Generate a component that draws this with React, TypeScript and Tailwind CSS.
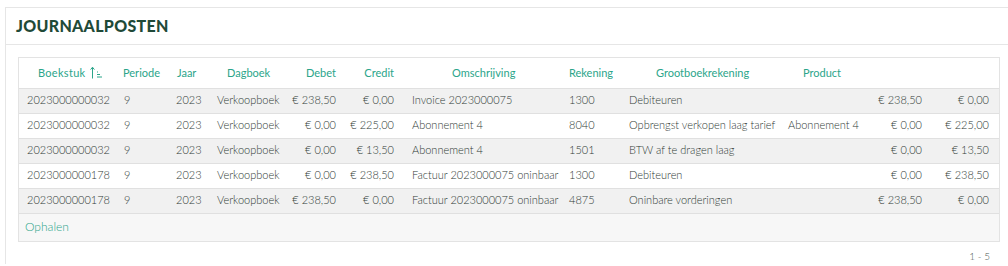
const rows = [
  { stuk: '2023000000032', periode: '9', jaar: '2023', dagboek: 'Verkoopboek', debet: '€ 238,50', credit: '€ 0,00', omschrijving: 'Invoice 2023000075', rekening: '1300', grootboek: 'Debiteuren', product: '', d2: '€ 238,50', c2: '€ 0,00' },
  { stuk: '2023000000032', periode: '9', jaar: '2023', dagboek: 'Verkoopboek', debet: '€ 0,00', credit: '€ 225,00', omschrijving: 'Abonnement 4', rekening: '8040', grootboek: 'Opbrengst verkopen laag tarief', product: 'Abonnement 4', d2: '€ 0,00', c2: '€ 225,00' },
  { stuk: '2023000000032', periode: '9', jaar: '2023', dagboek: 'Verkoopboek', debet: '€ 0,00', credit: '€ 13,50', omschrijving: 'Abonnement 4', rekening: '1501', grootboek: 'BTW af te dragen laag', product: '', d2: '€ 0,00', c2: '€ 13,50' },
  { stuk: '2023000000178', periode: '9', jaar: '2023', dagboek: 'Verkoopboek', debet: '€ 0,00', credit: '€ 238,50', omschrijving: 'Factuur 2023000075 oninbaar', rekening: '1300', grootboek: 'Debiteuren', product: '', d2: '€ 0,00', c2: '€ 238,50' },
  { stuk: '2023000000178', periode: '9', jaar: '2023', dagboek: 'Verkoopboek', debet: '€ 238,50', credit: '€ 0,00', omschrijving: 'Factuur 2023000075 oninbaar', rekening: '4875', grootboek: 'Oninbare vorderingen', product: '', d2: '€ 238,50', c2: '€ 0,00' },
];

function SortIcon() {
  return (
    <svg width="13" height="13" viewBox="0 0 13 13" className="ml-[4px] inline-block" fill="none" stroke="#2ba58a" strokeWidth="1">
      <path d="M2.5 12.5V1.5M0.6 3.6L2.5 1.2L4.4 3.6" />
      <path d="M7 6H8M7 8.5H10M7 11H12" />
    </svg>
  );
}

export default function App() {
  const th = 'h-[30px] p-0 align-middle font-normal text-[#2ba58a] whitespace-nowrap';
  const td = 'h-[25px] p-0 align-middle whitespace-nowrap';

  return (
    <div className="h-[266px] w-[1008px] overflow-hidden bg-white pl-[5px] pt-[7px]" style={{ fontFamily: 'Lato, "Open Sans", sans-serif' }}>
      <div className="w-[1012px] border-l border-t border-[#e6e6e6]">
        <div className="flex h-[37px] items-center border-b border-[#e6e6e6] pl-[10px]">
          <h1 className="text-[16px] font-black tracking-[0.3px] text-[#1f4a38]">JOURNAALPOSTEN</h1>
        </div>
        <div className="pl-[12px] pt-[12px]">
          <div className="w-[982px] border border-[#e3e3e3]">
            <table className="w-[980px] table-fixed border-collapse text-[11px] font-light text-[#2f3a35]">
              <colgroup>
                <col className="w-[96px]" />
                <col className="w-[52px]" />
                <col className="w-[41px]" />
                <col className="w-[78px]" />
                <col className="w-[59px]" />
                <col className="w-[58px]" />
                <col className="w-[157px]" />
                <col className="w-[60px]" />
                <col className="w-[159px]" />
                <col className="w-[84px]" />
                <col className="w-[68px]" />
                <col className="w-[68px]" />
              </colgroup>
              <thead>
                <tr className="border-b border-[#e0e0e0]">
                  <th className={`${th} pl-[19px] text-left`}>
                    <span className="inline-flex items-center tracking-[0.3px]">Boekstuk<SortIcon /></span>
                  </th>
                  <th className={`${th} pl-[8px] text-left`}>Periode</th>
                  <th className={`${th} pl-[10px] text-left`}>Jaar</th>
                  <th className={`${th} pl-[19px] text-left`}>Dagboek</th>
                  <th className={`${th} pr-[9px] text-right`}>Debet</th>
                  <th className={`${th} pr-[9px] text-right`}>Credit</th>
                  <th className={`${th} pl-[49px] text-left`}>Omschrijving</th>
                  <th className={`${th} pl-[9px] text-left`}>Rekening</th>
                  <th className={`${th} pl-[36px] text-left`}>Grootboekrekening</th>
                  <th className={`${th} pl-[24px] text-left`}>Product</th>
                  <th className={th}></th>
                  <th className={th}></th>
                </tr>
              </thead>
              <tbody>
                {rows.map((r, i) => (
                  <tr key={i} className={`border-b border-[#e0e0e0] ${i % 2 === 0 ? 'bg-[#f1f1f1]' : 'bg-white'}`}>
                    <td className={`${td} pl-[8px]`}>{r.stuk}</td>
                    <td className={`${td} pl-[9px]`}>{r.periode}</td>
                    <td className={`${td} pl-[9px]`}>{r.jaar}</td>
                    <td className={`${td} pl-[9px]`}>{r.dagboek}</td>
                    <td className={`${td} pr-[9px] text-right`}>{r.debet}</td>
                    <td className={`${td} pr-[9px] text-right`}>{r.credit}</td>
                    <td className={`${td} pl-[9px]`}>{r.omschrijving}</td>
                    <td className={`${td} pl-[9px]`}>{r.rekening}</td>
                    <td className={`${td} pl-[9px]`}>{r.grootboek}</td>
                    <td className={`${td} pl-[9px]`}>{r.product}</td>
                    <td className={`${td} pr-[9px] text-right`}>{r.d2}</td>
                    <td className={`${td} pr-[10px] text-right`}>{r.c2}</td>
                  </tr>
                ))}
              </tbody>
            </table>
            <div className="flex h-[27px] items-center bg-[#f7f7f7] pl-[6px] text-[12px] font-light text-[#2ba58a]">
              Ophalen
            </div>
          </div>
          <div className="flex w-[982px] justify-end pr-[10px] pt-[7px] text-[10px] font-light text-[#4c5652]">
            1 - 5
          </div>
        </div>
      </div>
    </div>
  );
}
